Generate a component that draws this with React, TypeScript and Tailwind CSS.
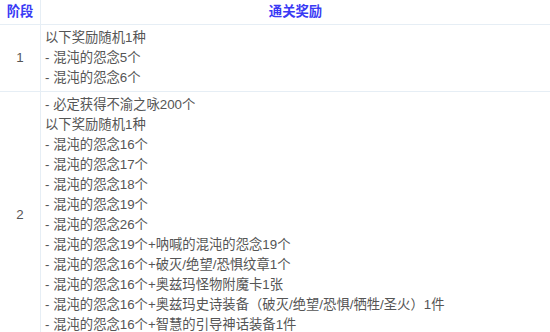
import React from "react";

const row1 = ["以下奖励随机1种", "- 混沌的怨念5个", "- 混沌的怨念6个"];
const row2 = [
  "- 必定获得不渝之咏200个",
  "以下奖励随机1种",
  "- 混沌的怨念16个",
  "- 混沌的怨念17个",
  "- 混沌的怨念18个",
  "- 混沌的怨念19个",
  "- 混沌的怨念26个",
  "- 混沌的怨念19个+呐喊的混沌的怨念19个",
  "- 混沌的怨念16个+破灭/绝望/恐惧纹章1个",
  "- 混沌的怨念16个+奥兹玛怪物附魔卡1张",
  "- 混沌的怨念16个+奥兹玛史诗装备（破灭/绝望/恐惧/牺牲/圣火）1件",
  "- 混沌的怨念16个+智慧的引导神话装备1件",
];

export default function App() {
  return (
    <div
      className="w-[550px] h-[332px] overflow-hidden bg-white text-[13.33px] leading-[20px] text-[#555]"
      style={{ fontFamily: '"Liberation Sans", "Noto Sans CJK SC", sans-serif' }}
    >
      <div className="grid grid-cols-[41px_1fr]">
        <div className="h-[25px] flex items-center justify-center font-bold text-[#3a3af5] border-b border-r border-[#e6eef5]">
          阶段
        </div>
        <div className="h-[25px] flex items-center justify-center font-bold text-[#3a3af5] border-b border-[#e6eef5]">
          通关奖励
        </div>

        <div className="flex items-center justify-center border-b border-r border-[#e6eef5]">1</div>
        <div className="py-[3px] pl-[4px] border-b border-[#e6eef5]">
          {row1.map((t, i) => (
            <div key={i}>{t}</div>
          ))}
        </div>

        <div className="flex items-center justify-center border-b border-r border-[#e6eef5]">2</div>
        <div className="py-[3px] pl-[4px] border-b border-[#e6eef5]">
          {row2.map((t, i) => (
            <div key={i}>{t}</div>
          ))}
        </div>
      </div>
    </div>
  );
}
